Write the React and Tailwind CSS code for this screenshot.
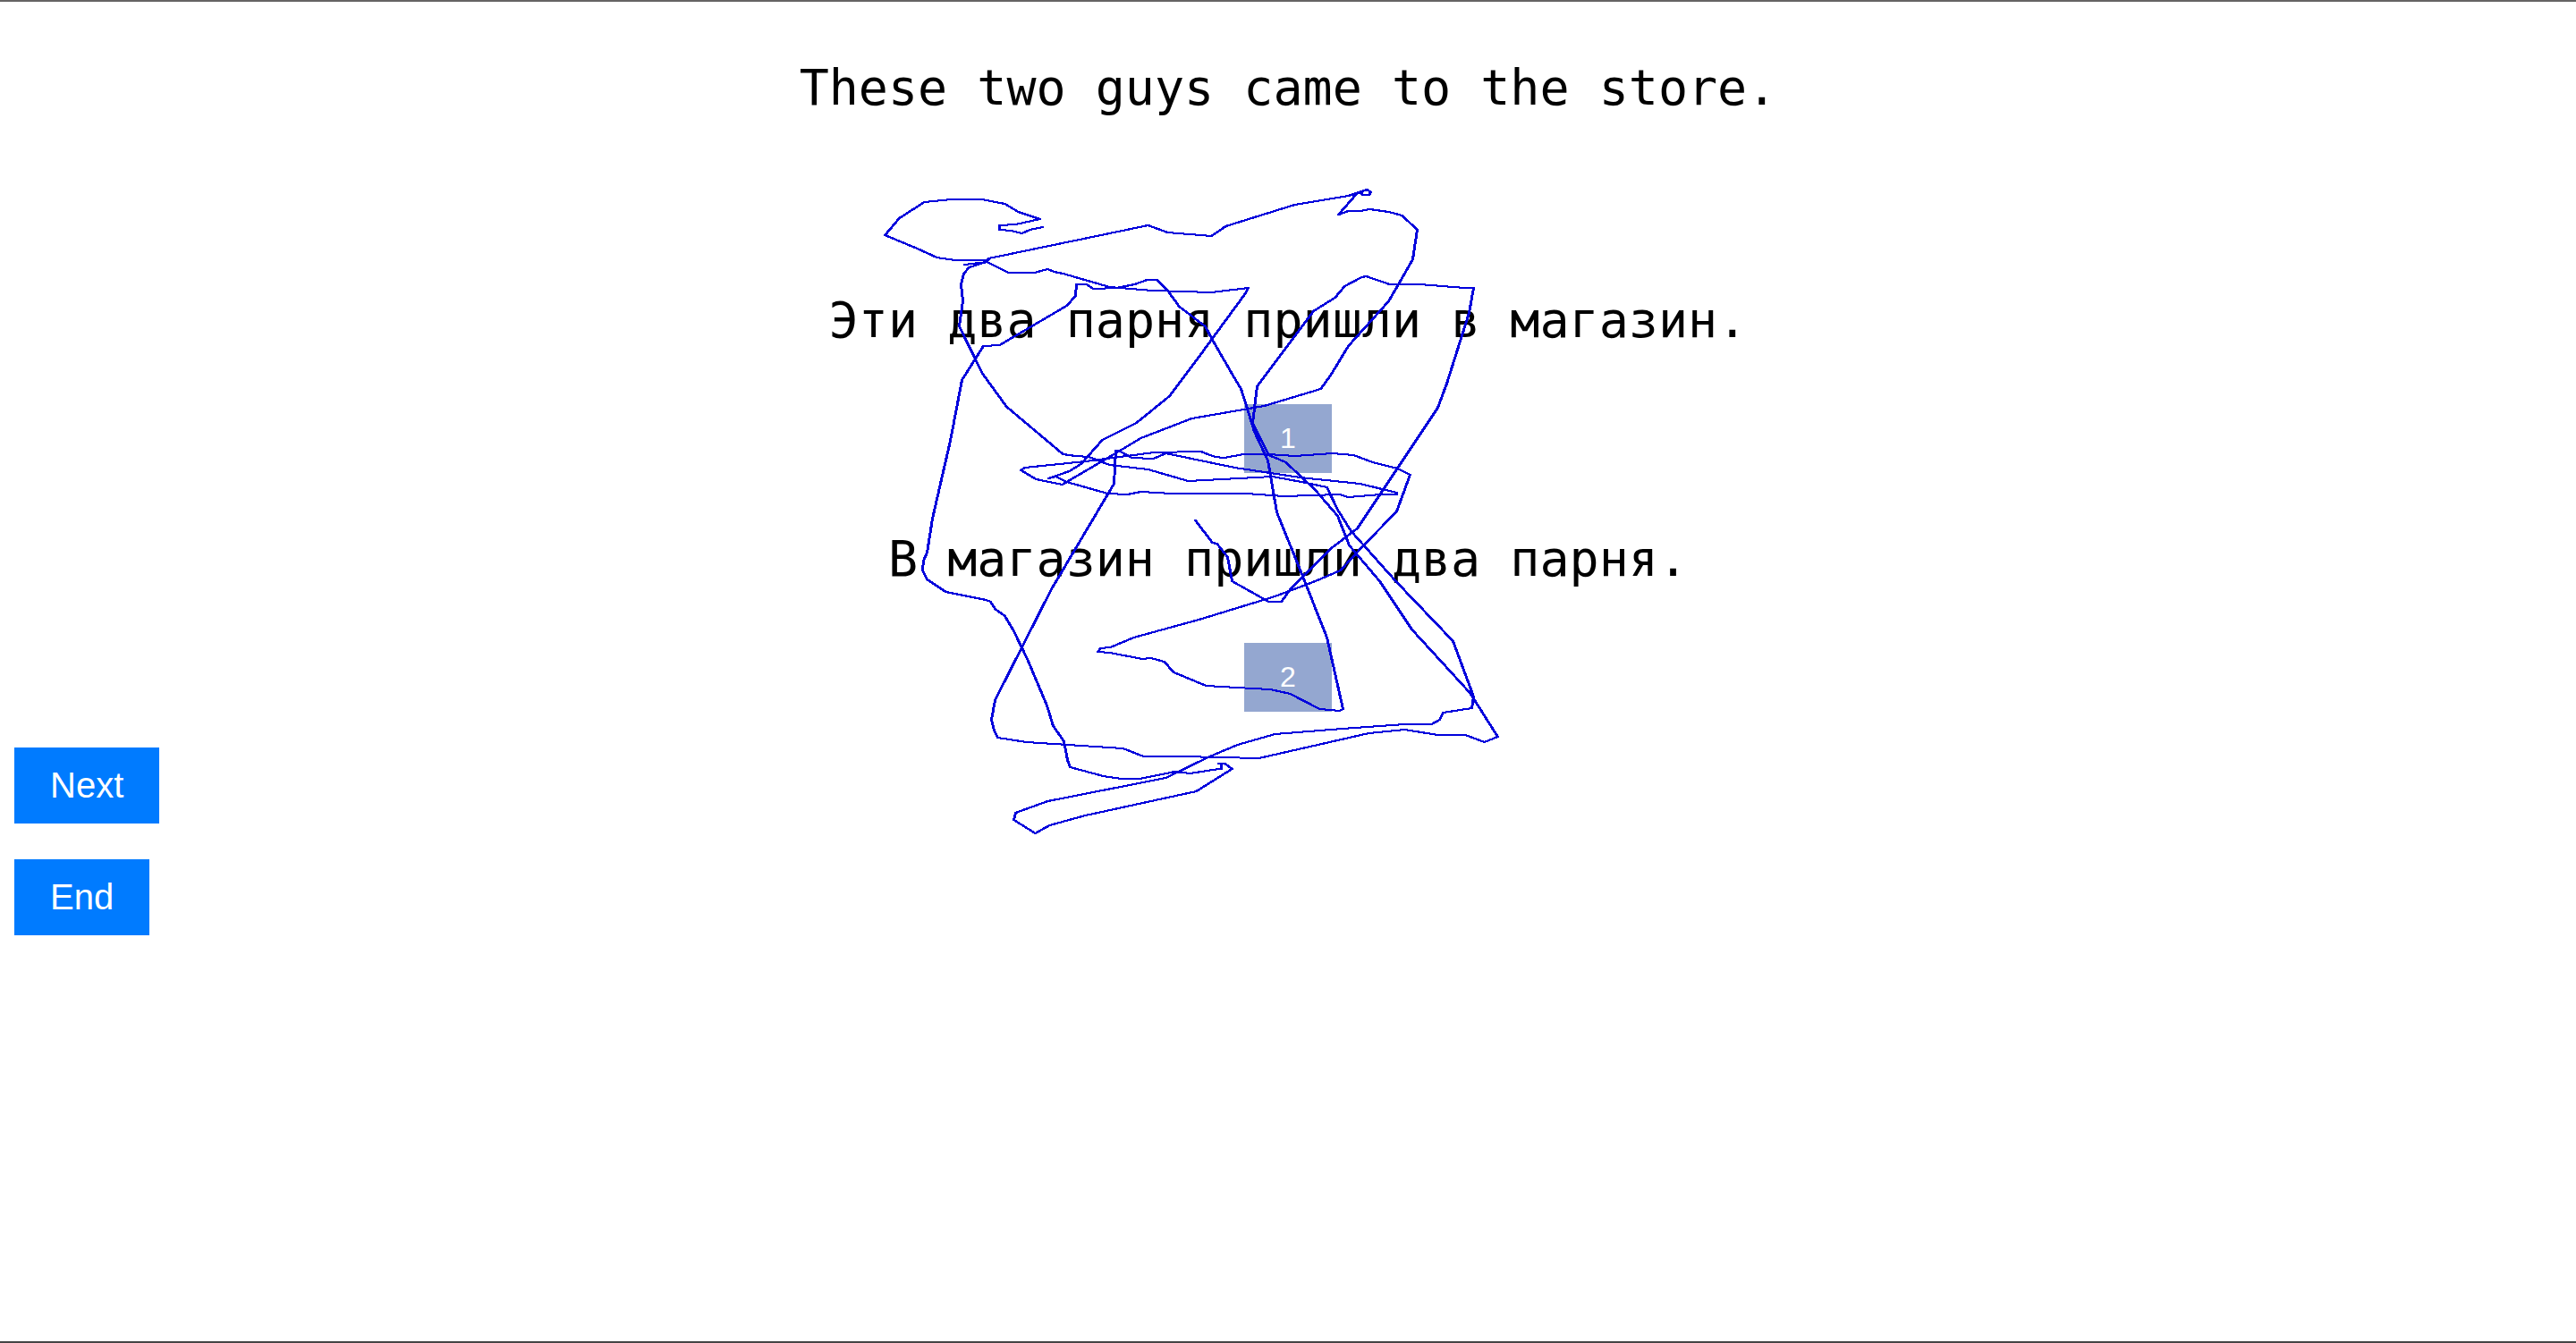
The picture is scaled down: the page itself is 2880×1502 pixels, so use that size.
const strokePoints = [
  // loop in the upper left, then across the top
  "1165,254 1151,257 1142,261 1130,258 1117,257 1117,252 1135,251 1162,245 1138,237 1123,228 1097,223 1063,223 1033,226 1005,244 989,263 1025,278 1047,288 1067,291 1103,291 1105,289 1240,261 1283,252 1305,260 1354,264 1370,253 1447,229 1507,219 1528,212 1532,215 1530,218 1523,218 1521,215 1516,217 1496,240 1507,236 1520,236 1531,234 1552,237 1567,241 1584,257 1579,290 1563,318 1552,337 1507,387 1487,420 1476,435 1413,454 1332,468 1275,490 1245,508 1187,542 1158,536 1141,526 1145,523 1213,516 1290,506 1342,505 1358,511 1368,512 1390,508 1417,508 1447,510 1489,507 1513,509 1534,517 1562,524 1576,531 1561,572 1524,610 1498,638 1470,650 1425,667 1340,693 1267,713 1241,724 1230,725 1227,729 1240,730 1277,737 1286,736 1301,740 1312,752 1348,767 1400,770 1420,771 1442,776 1475,793 1497,795 1501,793 1483,713 1455,642 1427,573 1420,532 1417,515 1402,483 1394,457 1387,435 1378,420 1355,380 1347,365 1318,343 1305,325 1293,313 1282,313 1268,318 1248,322 1222,323 1214,318 1203,318 1202,331 1192,342 1117,386 1099,387 1075,425 1062,493 1042,580 1036,618 1032,627 1031,638 1036,648 1057,662 1102,671 1107,673 1112,681 1123,689 1133,706 1148,737 1170,789 1177,812 1189,829 1193,850 1196,858 1233,868 1253,871 1274,871 1313,863 1330,865 1362,860 1365,860 1365,855",
  // lower sweep and back up to the left
  "1362,854 1369,854 1377,860 1337,885 1213,912 1173,923 1157,932 1133,917 1135,909 1171,896 1303,870 1350,847 1383,833 1425,821 1500,815 1570,810 1600,810 1609,805 1613,797 1645,792 1647,779 1624,717 1560,650 1510,594 1495,570 1483,545 1460,540 1422,533 1328,538 1283,525 1240,520 1217,511 1202,510 1188,508 1125,455 1098,418 1072,365 1076,337 1074,318 1077,306 1083,299 1102,293 1105,290",
  // second pass through the middle, ending under the first sentence
  "1078,296 1103,293 1127,305 1156,305 1171,301 1178,304 1188,306 1240,321 1288,325 1354,327 1395,322 1392,328 1340,399 1307,443 1270,473 1232,492 1208,519 1195,527 1172,535 1180,533 1192,539 1238,552 1260,553 1275,550 1310,552 1393,552 1435,555 1497,553 1507,556 1543,553 1561,553 1561,551 1520,541 1453,534 1380,523 1303,507 1289,513 1265,512 1252,505 1247,504 1245,541 1175,659 1112,783 1108,805 1111,817 1115,825 1147,830 1255,837 1278,846 1320,846 1407,848 1530,820 1570,816 1607,822 1638,822 1659,830 1674,824 1643,775 1578,704 1542,650 1508,610 1495,577 1470,548 1437,517 1418,509 1400,473 1405,432 1468,348 1492,333 1503,320 1522,310 1527,309 1553,318 1587,318 1637,322 1647,322 1642,350 1617,429 1607,456 1517,591 1488,613 1443,658 1432,673 1418,673 1377,650 1372,623 1360,608 1355,607 1336,582",
];

function Sentence({ children }) {
  return (
    <p className="text-center font-['DejaVu_Sans_Mono',monospace] text-[55px] leading-[70px]">
      {children}
    </p>
  );
}

function Choice({ text, number }) {
  return (
    <div className="flex flex-col items-center gap-[59px]">
      <Sentence>{text}</Sentence>
      <button
        type="button"
        className="bg-[#94a7d0] px-10 py-5 text-[32px] leading-[37px] text-white"
      >
        {number}
      </button>
    </div>
  );
}

function Action({ children }) {
  return (
    <button type="button" className="bg-[#007bff] px-10 py-5 text-[40px] leading-[45px] text-white">
      {children}
    </button>
  );
}

// A broad-nib pen: every stroke is two pixels tall and three pixels wide.
function PenStrokes() {
  return (
    <svg
      viewBox="960 190 960 760"
      aria-hidden="true"
      className="pointer-events-none absolute top-[188px] left-1/2 h-[760px] w-[960px] -translate-x-1/2"
      fill="none"
      stroke="#0000dc"
      strokeWidth="2"
      strokeLinejoin="round"
      strokeLinecap="square"
      shapeRendering="crispEdges"
    >
      {[0, 1].map((nib) => (
        <g key={nib} transform={`translate(${nib} 0)`}>
          {strokePoints.map((points) => (
            <polyline key={points} points={points} />
          ))}
        </g>
      ))}
    </svg>
  );
}

export default function App() {
  return (
    <main className="relative min-h-screen overflow-hidden border-y-2 border-t-[#666464] border-b-[#444444] bg-white px-4 pt-[61px] font-['Liberation_Sans',Arial,sans-serif] text-black">
      <Sentence>These two guys came to the store.</Sentence>
      <div className="mt-[190px] flex flex-col gap-[61px]">
        <Choice text="Эти два парня пришли в магазин." number="1" />
        <Choice text="В магазин пришли два парня." number="2" />
      </div>
      <div className="mt-10 flex flex-col items-start gap-10">
        <Action>Next</Action>
        <Action>End</Action>
      </div>
      <PenStrokes />
    </main>
  );
}
